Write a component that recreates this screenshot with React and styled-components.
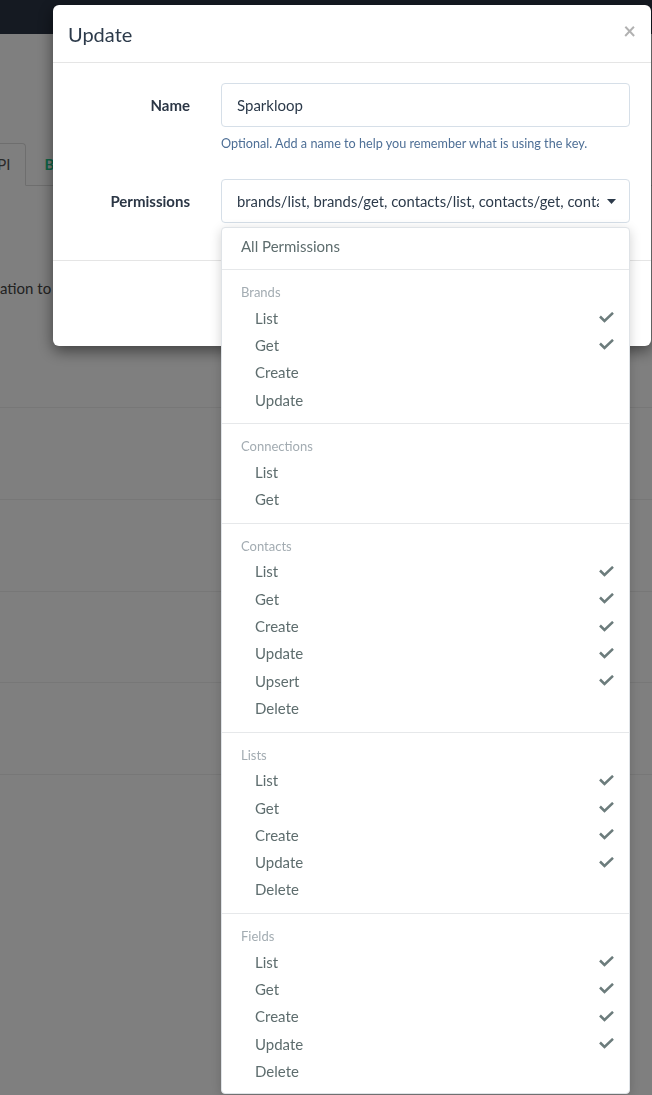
import React from "react";
import styled, { createGlobalStyle } from "styled-components";

const GlobalStyle = createGlobalStyle`
  * { box-sizing: border-box; }
  html, body { margin: 0; padding: 0; height: 100%; overflow: hidden; }
  body {
    font-family: Lato, "Noto Sans", "Liberation Sans", sans-serif;
    background: #ffffff;
    color: #333333;
  }
`;

/* ---------- background page ---------- */
const Page = styled.div`
  height: 1095px;
  overflow: hidden;
`;
const Navbar = styled.header`
  height: 34px;
  background: #2a3444;
`;
const Content = styled.main`
  padding-top: 109px;
`;
const TabList = styled.nav`
  display: flex;
  height: 43px;
  border-bottom: 1px solid #dddddd;
  margin-left: -29px;
`;
const Tab = styled.div`
  padding: 10px 15px;
  margin-right: 2px;
  line-height: 20px;
  font-size: 15px;
  border: 1px solid ${(p) => (p.$active ? "#dddddd" : "transparent")};
  border-bottom-color: transparent;
  border-radius: 4px 4px 0 0;
  background: ${(p) => (p.$active ? "#ffffff" : "transparent")};
  color: ${(p) => (p.$active ? "#555555" : "#1fc98e")};
  font-weight: ${(p) => (p.$active ? 400 : 700)};
  margin-bottom: -1px;
`;
const Intro = styled.p`
  margin: 91px 0 0;
  font-size: 15px;
  line-height: 22px;
  color: #444444;
`;
const Table = styled.div`
  margin-top: 108px;
  border-bottom: 1px solid #eeeeee;
`;
const TableRow = styled.div`
  height: 91.75px;
  border-top: 1px solid #eeeeee;
`;

/* ---------- modal ---------- */
const Overlay = styled.div`
  position: fixed;
  inset: 0;
  background: rgba(0, 0, 0, 0.5);
  padding: 5px 0 0 53px;
`;
const Modal = styled.div`
  width: 598px;
  background: #ffffff;
  border-radius: 6px;
  box-shadow: 0 5px 15px rgba(0, 0, 0, 0.5);
`;
const ModalHeader = styled.div`
  height: 58px;
  padding: 0 15px 0 15px;
  display: flex;
  align-items: center;
  justify-content: space-between;
  border-bottom: 1px solid #e5e5e5;
`;
const Title = styled.h4`
  margin: 0;
  font-size: 20px;
  font-weight: 400;
  color: #2c3a4a;
`;
const Close = styled.button`
  border: 0;
  background: none;
  padding: 0;
  font-family: inherit;
  font-size: 22px;
  font-weight: 700;
  line-height: 1;
  color: #000000;
  opacity: 0.3;
  margin-top: -6px;
`;
const ModalBody = styled.div`
  padding: 20px 21px 37px 15px;
`;
const FormGroup = styled.div`
  display: grid;
  grid-template-columns: 122px minmax(0, 1fr);
  column-gap: 31px;
  margin-bottom: ${(p) => p.$gap || 0}px;
`;
const Label = styled.label`
  text-align: right;
  font-size: 15px;
  font-weight: 700;
  line-height: 44px;
  color: #2b3645;
`;
const Field = styled.div`
  position: relative;
  min-width: 0;
`;
const Input = styled.div`
  height: 44px;
  border: 1px solid #d6dfe8;
  border-radius: 4px;
  padding: 0 15px;
  display: flex;
  align-items: center;
  font-size: 15px;
  color: #2c3a4a;
`;
const Help = styled.div`
  margin-top: 8px;
  font-size: 12.65px;
  line-height: 18px;
  color: #4e6f96;
`;
const Select = styled(Input)`
  padding: 0 0 0 15px;
  justify-content: space-between;
`;
const SelectValue = styled.span`
  flex: 1;
  white-space: nowrap;
  overflow: hidden;
  min-width: 0;
  font-size: 14.8px;
`;
const Caret = styled.span`
  flex: 0 0 30px;
  display: flex;
  justify-content: center;
  padding-right: 6px;
`;
const ModalFooter = styled.div`
  height: 86px;
  border-top: 1px solid #e5e5e5;
  padding: 0 30px 0 15px;
  display: flex;
  align-items: center;
  justify-content: flex-end;
  gap: 8px;
`;
const Button = styled.button`
  height: 40px;
  padding: 0 16px;
  border-radius: 4px;
  font-family: inherit;
  font-size: 15px;
  border: 1px solid ${(p) => (p.$primary ? "#1fc98e" : "#d6dfe8")};
  background: ${(p) => (p.$primary ? "#1fc98e" : "#ffffff")};
  color: ${(p) => (p.$primary ? "#ffffff" : "#2c3a4a")};
`;

/* ---------- dropdown ---------- */
const Menu = styled.div`
  position: absolute;
  top: 48px;
  left: 0;
  right: 0;
  z-index: 5;
  background: #ffffff;
  border: 1px solid #dfe3e7;
  border-radius: 4px;
  box-shadow: 0 3px 12px rgba(0, 0, 0, 0.18);
`;
const AllRow = styled.div`
  height: 41px;
  padding: 1px 19px 5px;
  line-height: 35px;
  font-size: 15px;
  color: #5e6d6e;
`;
const Group = styled.div`
  border-top: 1px solid #e6e8ea;
  padding: 10px 0 ${(p) => (p.$last ? 8 : 10)}px;
`;
const GroupHeader = styled.div`
  height: 24px;
  line-height: 24px;
  padding-left: 19px;
  font-size: 13px;
  color: #a3acb2;
`;
const Option = styled.div`
  height: 27.3px;
  padding: 0 15px 0 33px;
  display: flex;
  align-items: center;
  justify-content: space-between;
  font-size: 15px;
  color: #5e6d6e;
`;

const Check = () => (
  <svg width="15" height="11" viewBox="0 0 15 11" aria-hidden="true">
    <polyline
      points="1,4.5 5.5,9 14,0.8"
      fill="none"
      stroke="#6c7c7c"
      strokeWidth="2.5"
    />
  </svg>
);

const CaretIcon = () => (
  <svg width="9" height="5" viewBox="0 0 9 5" aria-hidden="true">
    <polygon points="0,0 9,0 4.5,5" fill="#2c3a4a" />
  </svg>
);

const groups = [
  { name: "Brands", items: [["List", 1], ["Get", 1], ["Create", 0], ["Update", 0]] },
  { name: "Connections", items: [["List", 0], ["Get", 0]] },
  {
    name: "Contacts",
    items: [["List", 1], ["Get", 1], ["Create", 1], ["Update", 1], ["Upsert", 1], ["Delete", 0]],
  },
  { name: "Lists", items: [["List", 1], ["Get", 1], ["Create", 1], ["Update", 1], ["Delete", 0]] },
  { name: "Fields", items: [["List", 1], ["Get", 1], ["Create", 1], ["Update", 1], ["Delete", 0]] },
];

export default function App() {
  return (
    <>
      <GlobalStyle />
      <Page>
        <Navbar />
        <Content>
          <TabList>
            <Tab $active>API</Tab>
            <Tab>Brands</Tab>
          </TabList>
          <Intro>ation to integrate with your account.</Intro>
          <Table>
            <TableRow />
            <TableRow />
            <TableRow />
            <TableRow />
          </Table>
        </Content>
      </Page>
      <Overlay>
        <Modal>
          <ModalHeader>
            <Title>Update</Title>
            <Close aria-label="Close">×</Close>
          </ModalHeader>
          <ModalBody>
            <FormGroup $gap={26}>
              <Label>Name</Label>
              <Field>
                <Input>Sparkloop</Input>
                <Help>Optional. Add a name to help you remember what is using the key.</Help>
              </Field>
            </FormGroup>
            <FormGroup>
              <Label>Permissions</Label>
              <Field>
                <Select>
                  <SelectValue>
                    brands/list, brands/get, contacts/list, contacts/get, contacts/create,
                    contacts/update, contacts/upsert, lists/list, lists/get, lists/create,
                    lists/update, fields/list, fields/get, fields/create, fields/update
                  </SelectValue>
                  <Caret>
                    <CaretIcon />
                  </Caret>
                </Select>
                <Menu>
                  <AllRow>All Permissions</AllRow>
                  {groups.map((g, gi) => (
                    <Group key={g.name} $last={gi === groups.length - 1}>
                      <GroupHeader>{g.name}</GroupHeader>
                      {g.items.map(([label, on]) => (
                        <Option key={label}>
                          <span>{label}</span>
                          {on ? <Check /> : null}
                        </Option>
                      ))}
                    </Group>
                  ))}
                </Menu>
              </Field>
            </FormGroup>
          </ModalBody>
          <ModalFooter>
            <Button>Cancel</Button>
            <Button $primary>Update</Button>
          </ModalFooter>
        </Modal>
      </Overlay>
    </>
  );
}
